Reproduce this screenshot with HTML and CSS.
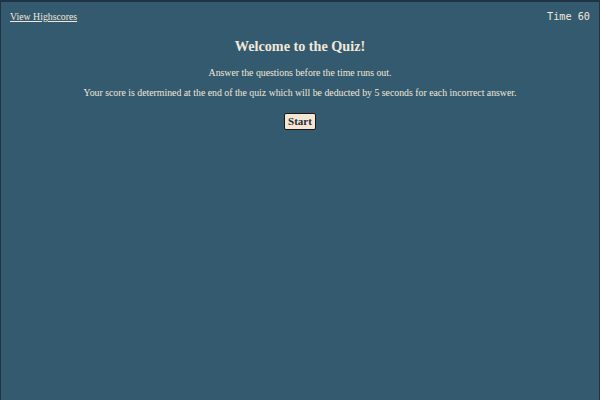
FILE: index.html
```html
<!DOCTYPE html>
<html>
<head>
<meta charset="utf-8">
<link rel="stylesheet" href="styles.css">
</head>
<body>
<header class="top">
  <a class="scores" href="#">View Highscores</a>
  <span class="timer">Time 60</span>
</header>
<main class="intro">
  <h1 class="title">Welcome to the Quiz!</h1>
  <p class="text">Answer the questions before the time runs out.</p>
  <p class="text long">Your score is determined at the end of the quiz which will be deducted by 5 seconds for each incorrect answer.</p>
  <button class="start">Start</button>
</main>
</body>
</html>
```
FILE: styles.css
```css
html, body { margin: 0; height: 100%; }
body {
  background: #335a6e;
  color: #f2e8da;
  font-family: "Liberation Serif", serif;
  border-top: 2px solid #1f3344;
  border-left: 1px solid #1f3344;
  border-right: 1px solid #1f3344;
  box-sizing: border-box;
}
.top {
  display: flex;
  justify-content: space-between;
  align-items: center;
  padding: 8px 9px 0 9px;
  line-height: 14px;
}
.scores { color: #f2e8da; font-size: 9.8px; }
.timer { font-family: "DejaVu Sans Mono", monospace; font-size: 10.2px; }
.intro { display: flex; flex-direction: column; align-items: center; }
.title { font-size: 14.2px; line-height: 18px; margin: 13px 0 0; }
.text { font-size: 9.8px; line-height: 12px; margin: 12px 0 0; }
.long { margin-top: 8px; }
.start {
  margin-top: 14px;
  font-family: inherit; font-weight: bold; font-size: 11px; line-height: 13px;
  background: #f5e6d3; color: #1f2d36;
  border: 1px solid #1a1a1a; border-radius: 2px;
  padding: 1px 3px;
}
```
